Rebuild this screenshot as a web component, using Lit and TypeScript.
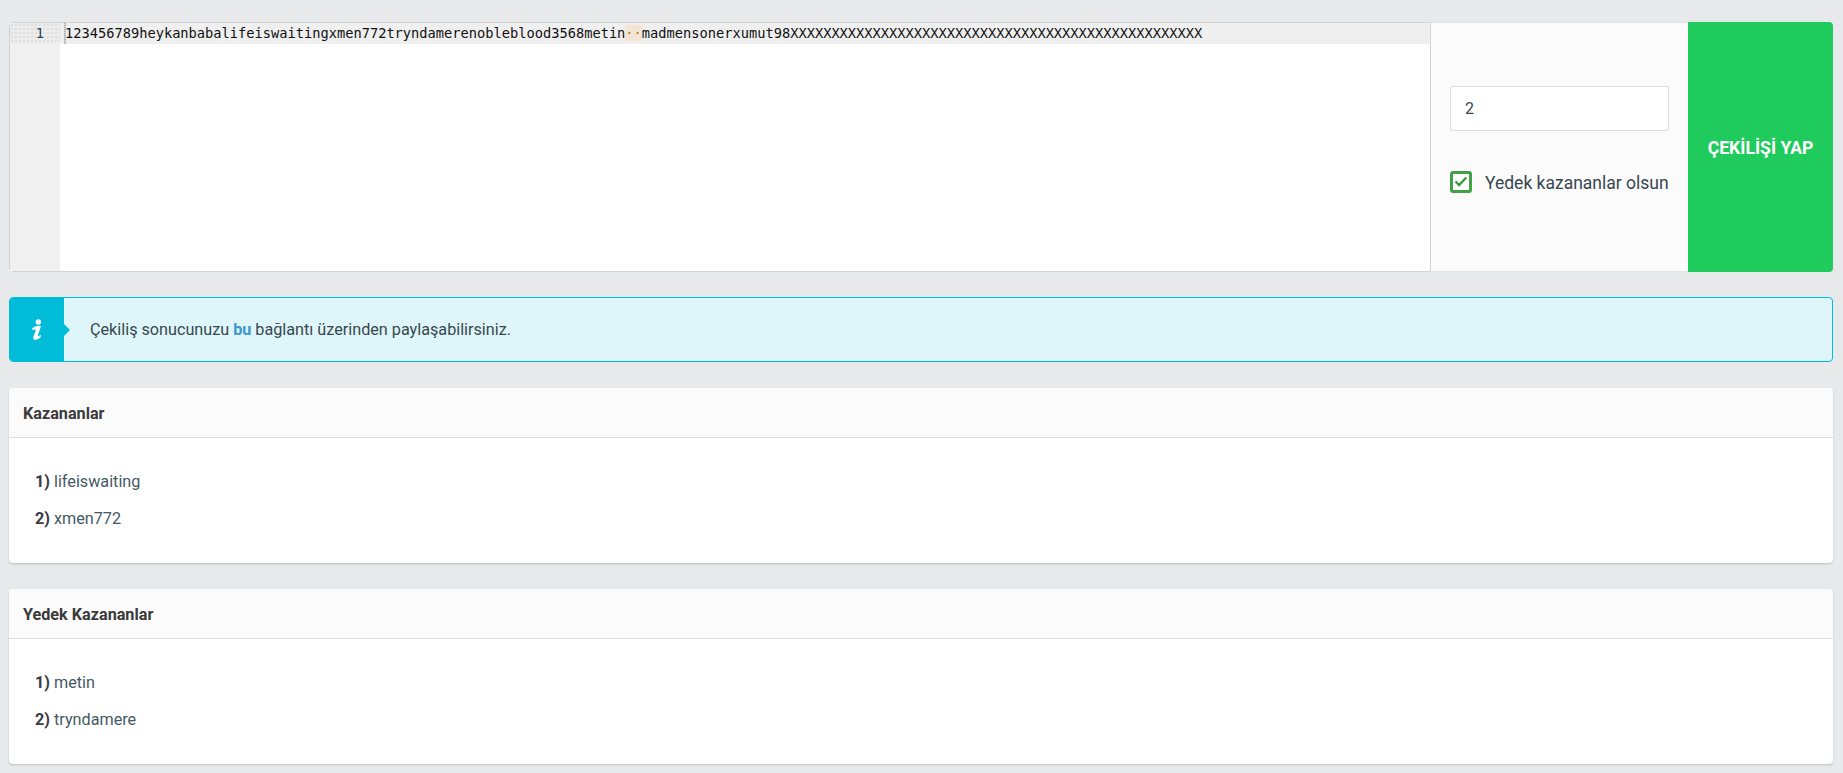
import { LitElement, html, css } from "lit";
import { customElement } from "lit/decorators.js";

@customElement("app-root")
export class AppRoot extends LitElement {
  static styles = css`
    :host { display: block; min-height: 773px; background: #e8e9eb; font-family: Roboto, sans-serif; color: #333; box-sizing: border-box; padding: 22px 10px 0 9px; overflow: hidden; height: 773px; }
    * { box-sizing: border-box; }
    .top { display: flex; height: 250px; border-radius: 4px; overflow: hidden; background: #fff; }
    .editor { flex: 1; display: flex; min-width: 0; border: 1px solid #d2d2d2; border-radius: 4px 0 0 4px; position: relative; }
    .gutter { width: 50px; background: #f0f0f0; font: 13.7px/21px "DejaVu Sans Mono", monospace; color: #2c3e50; flex: none; }
    .gnum { height: 21px; padding-right: 16px; text-align: right; background-color: #ececec; background-image: radial-gradient(circle, #dcdcdc 0.7px, transparent 0.8px); background-size: 4px 4px; }
    .code { flex: 1; min-width: 0; }
    .line { height: 21px; padding-left: 5px; background: #efefef; font: 13.7px/21px "DejaVu Sans Mono", monospace; color: #111; white-space: pre; overflow: hidden; position: relative; }
    .line::before { content: ""; position: absolute; left: 4px; top: 0; bottom: 0; width: 2px; background-image: repeating-linear-gradient(180deg, #b4b4b4 0 1px, #d0d0d0 1px 2px); }
    .sp { background: #f3e4d4; color: #c8741a; }
    .side { width: 257px; flex: none; background: #fbfbfb; padding: 0 19px 16px; display: flex; flex-direction: column; justify-content: center; gap: 40px; border: 1px solid #e2e2e2; border-left: 0; border-right: 0; }
    .input { height: 45px; border: 1px solid #ddd; border-radius: 2px; background: #fff; font-size: 16px; padding: 0 14px; display: flex; align-items: center; color: #37474f; }
    .check { display: flex; align-items: center; gap: 13px; font-size: 17.5px; color: #37474f; white-space: nowrap; }
    .label { padding-top: 2px; }
    .box { width: 22px; height: 22px; border: 3.5px solid #43a047; border-radius: 3px; display: flex; align-items: center; justify-content: center; flex: none; background: #fff; }
    .btn { width: 145px; flex: none; background: #1ecb5c; color: #fff; font-weight: 700; font-size: 17.6px; display: flex; align-items: center; justify-content: center; padding-top: 1px; }
    .alert { margin-top: 25px; height: 65px; display: flex; align-items: center; background: #def6f9; border: 1px solid #00bcd9; border-radius: 4px; overflow: hidden; font-size: 16.2px; color: #37474f; }
    .ico { width: 54px; align-self: stretch; background: #00bcd9; display: flex; align-items: center; justify-content: center; flex: none; }
    .arrow { flex: none; width: 0; height: 0; border-left: 6px solid #00bcd9; border-top: 6px solid transparent; border-bottom: 6px solid transparent; }
    .msg { margin-left: 20px; }
    .msg b { color: #3d95d0; font-weight: 700; }
    .card { margin-top: 26px; height: 175px; background: #fff; border-radius: 4px; box-shadow: 0 1px 2px rgba(0,0,0,.18); overflow: hidden; }
    .head { height: 50px; background: #fbfbfb; border-bottom: 1px solid #ddd; padding: 2px 14px 0; display: flex; align-items: center; font-weight: 700; font-size: 16.2px; color: #3a3a3a; }
    .body { padding: 33px 26px 0; display: flex; flex-direction: column; gap: 15px; font-size: 16.2px; color: #455a64; }
    .item { line-height: 22px; }
    .item b { color: #3a3a44; font-weight: 700; }
  `;
  render() {
    const text = "123456789heykanbabalifeiswaitingxmen772tryndamerenobleblood3568metin";
    const rest = "madmensonerxumut98" + "X".repeat(50);
    return html`
      <div class="top">
        <div class="editor">
          <div class="gutter"><div class="gnum">1</div></div>
          <div class="code"><div class="line">${text}<span class="sp">··</span>${rest}</div></div>
        </div>
        <div class="side">
          <div class="input">2</div>
          <div class="check"><span class="box"><svg width="14" height="11" viewBox="0 0 14 11"><path d="M1.5 5.5l3.6 3.6 7.2-7.6" fill="none" stroke="#3a9a3a" stroke-width="2.4"/></svg></span><span class="label">Yedek kazananlar olsun</span></div>
        </div>
        <div class="btn">ÇEKİLİŞİ YAP</div>
      </div>
      <div class="alert">
        <div class="ico"><svg width="13.3" height="25" viewBox="75 80 40 75"><circle cx="100" cy="95" r="8" fill="#fff"/><path d="M82 113Q96 104 108 107L98 138Q103 137 108 133L106 142Q96 150 88 148Q83 146 85 139L93 118Q87 117 82 119Z" fill="#fff"/></svg></div>
        <div class="arrow"></div>
        <div class="msg">Çekiliş sonucunuzu <b>bu</b> bağlantı üzerinden paylaşabilirsiniz.</div>
      </div>
      <div class="card"><div class="head">Kazananlar</div><div class="body"><div class="item"><b>1)</b> lifeiswaiting</div><div class="item"><b>2)</b> xmen772</div></div></div>
      <div class="card"><div class="head">Yedek Kazananlar</div><div class="body"><div class="item"><b>1)</b> metin</div><div class="item"><b>2)</b> tryndamere</div></div></div>
    `;
  }
}
